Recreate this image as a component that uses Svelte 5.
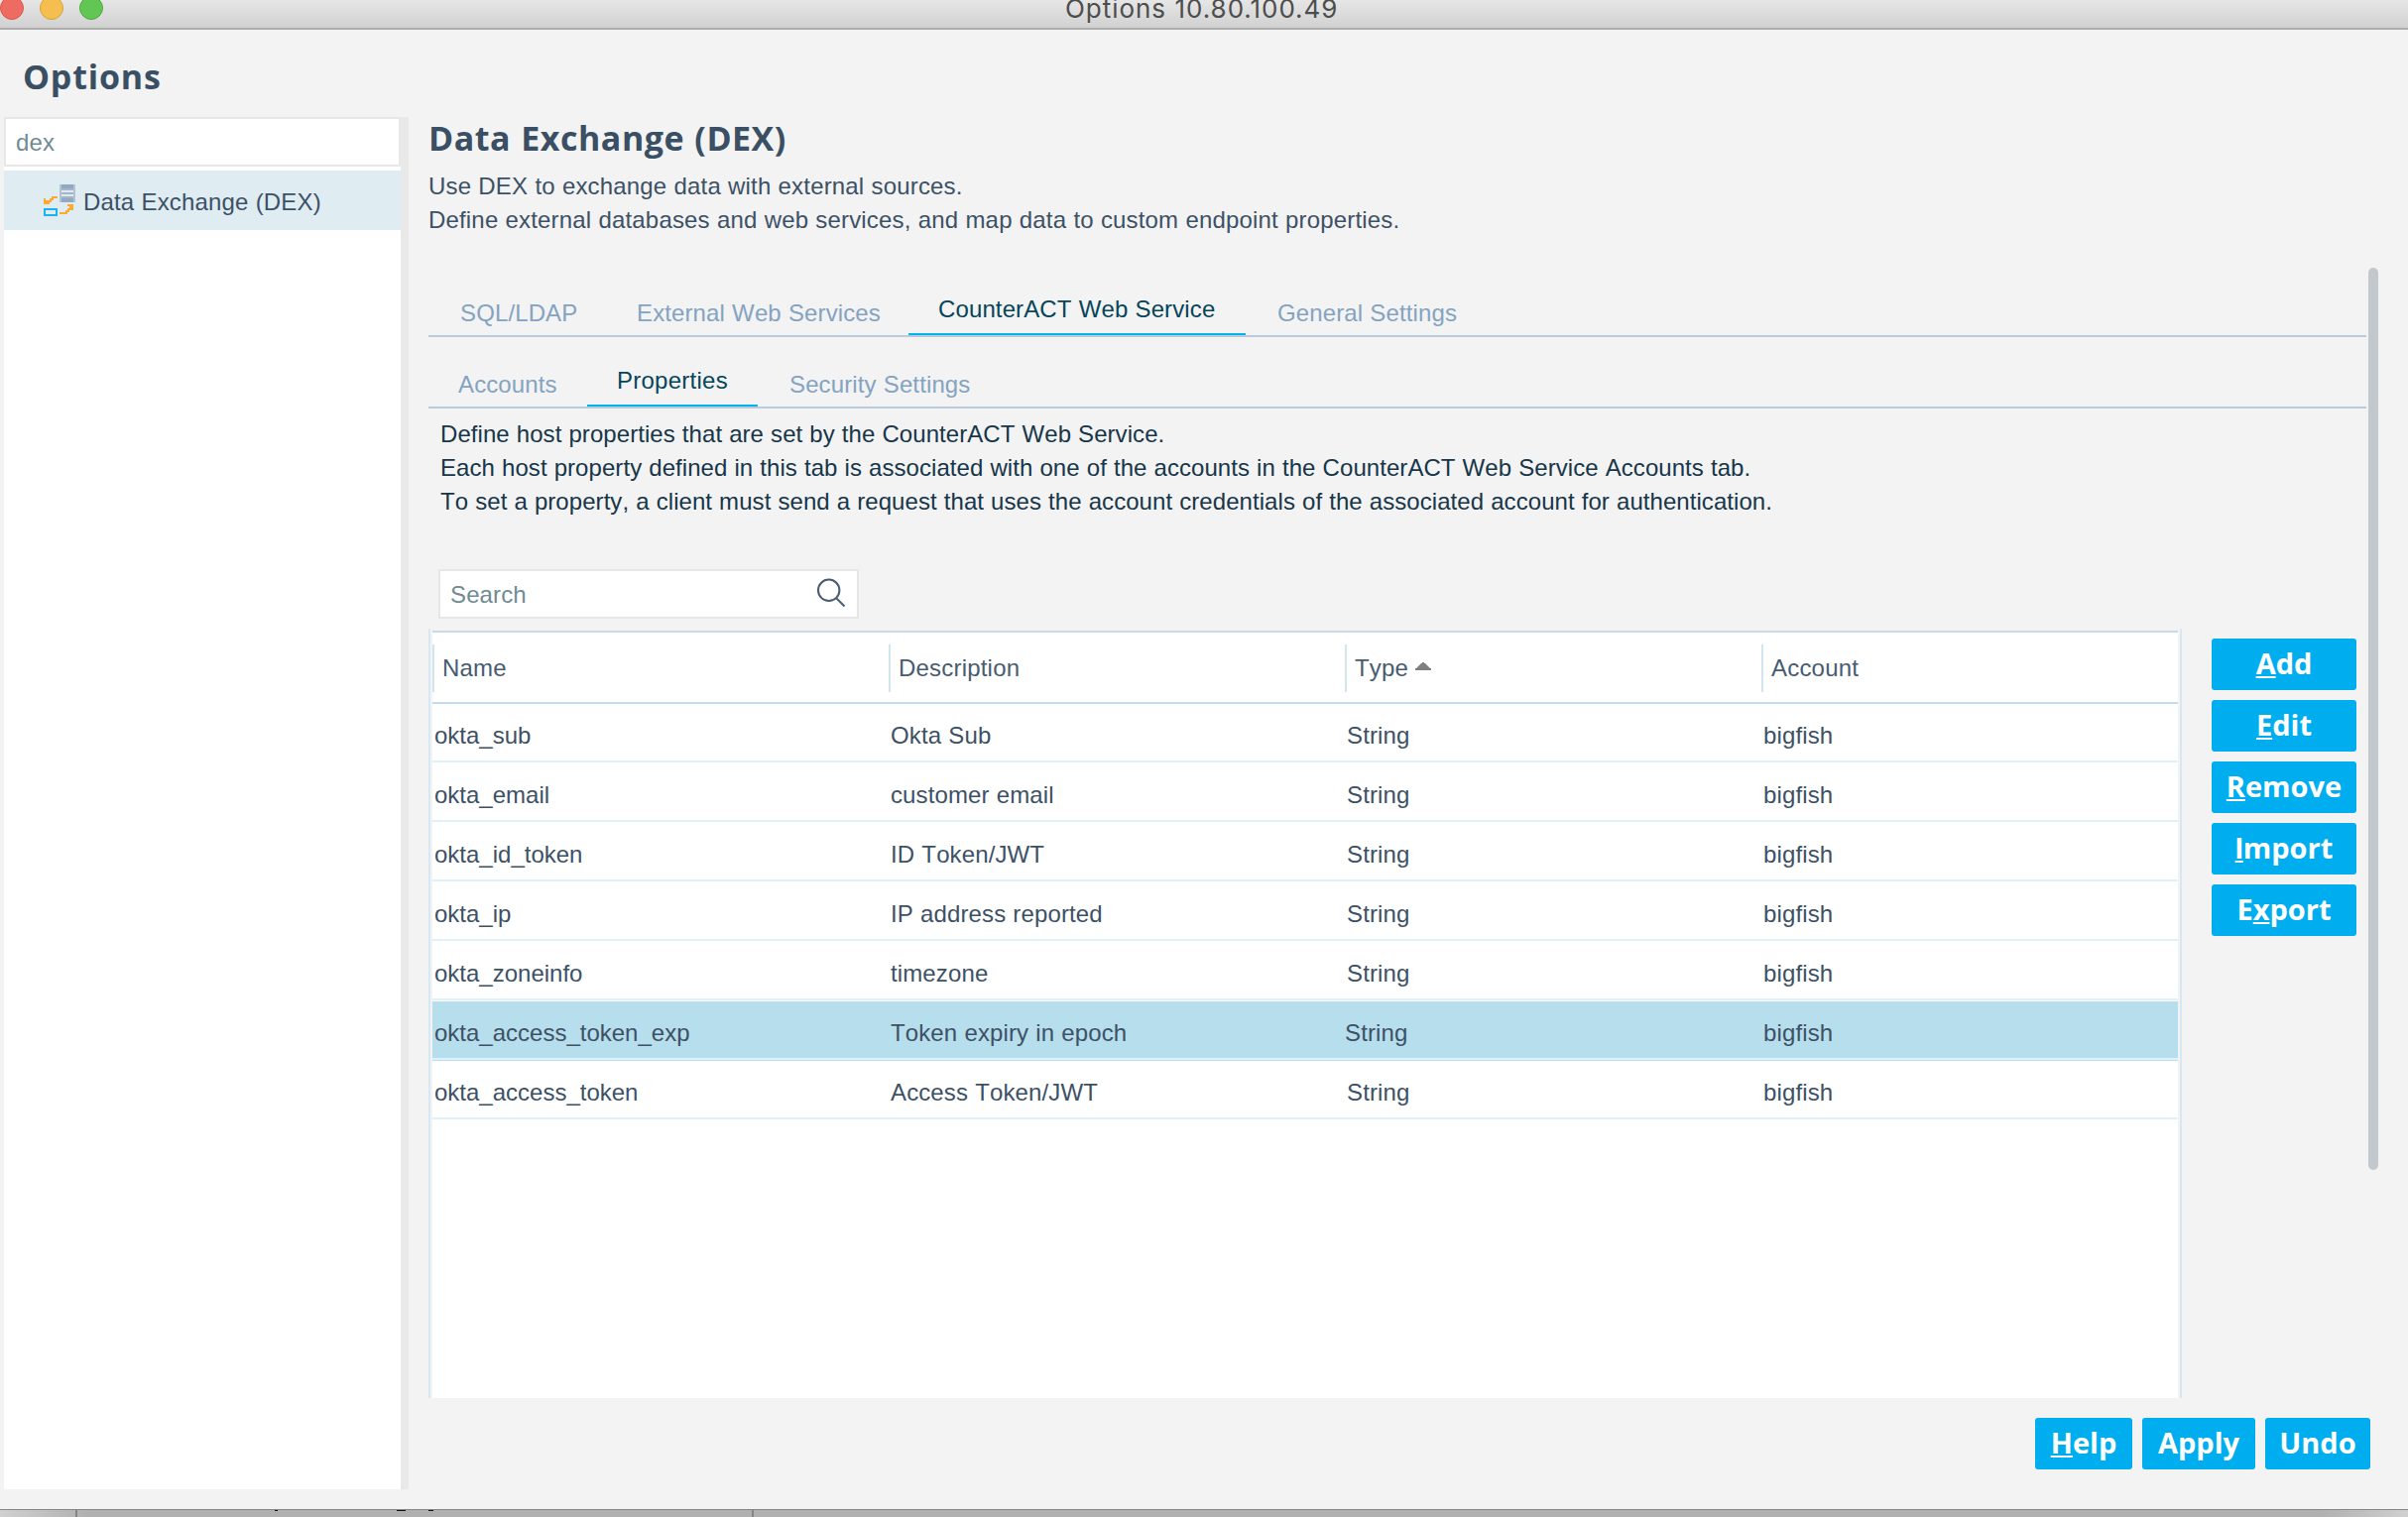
<script>
  const rows = [
    ['okta_sub', 'Okta Sub'],
    ['okta_email', 'customer email'],
    ['okta_id_token', 'ID Token/JWT'],
    ['okta_ip', 'IP address reported'],
    ['okta_zoneinfo', 'timezone'],
    ['okta_access_token_exp', 'Token expiry in epoch'],
    ['okta_access_token', 'Access Token/JWT'],
  ];
  const selected = 5;
  // before, mnemonic letter, after
  const actions = [
    ['', 'A', 'dd'],
    ['', 'E', 'dit'],
    ['', 'R', 'emove'],
    ['', 'I', 'mport'],
    ['E', 'x', 'port'],
  ];
</script>

<div class="screen">
  <header class="titlebar">
    <div class="lights"><i class="red"></i><i class="yellow"></i><i class="green"></i></div>
    <span class="wintitle">Options 10.80.100.49</span>
  </header>

  <div class="window">
    <aside>
      <h1>Options</h1>
      <div class="side">
        <div class="filter">dex</div>
        <div class="node">
          <svg width="32" height="32" viewBox="0 0 32 32" shape-rendering="crispEdges">
            <path d="M16 0h16v18H16z" fill="#b4c3d3" />
            <path d="M18 0h12v4H18zM18 14h12v4H18z" fill="#92a9c1" />
            <path d="M18 4h12v2H18zM18 8h12v2H18zM18 12h12v2H18z" fill="#a3b6c9" />
            <path d="M18 6h12v2H18zM18 10h12v2H18z" fill="#e0e9f1" />
            <path d="M8 12h6v2H8zM6 14h4v2H6zM0 14h2v2H0zM0 16h8v2H0zM0 18h6v2H0z" fill="#fbab30" />
            <path d="M24 20h6v2h-6zM26 22h4v4h-4zM24 24h2v2h-2zM22 26h4v2h-4zM16 28h8v2h-8z" fill="#fbab30" />
            <path d="M1 25h12v6H1z" fill="none" stroke="#1eb1f0" stroke-width="2" />
          </svg>
          <span>Data Exchange (DEX)</span>
        </div>
      </div>
    </aside>

    <main>
      <h2>Data Exchange (DEX)</h2>
      <p class="intro">Use DEX to exchange data with external sources.<br />Define external databases and web services, and map data to custom endpoint properties.</p>

      <div class="scroller">
        <div class="pane">
          <nav class="tabs main-tabs">
            <span class="w1">SQL/LDAP</span>
            <span class="w2">External Web Services</span>
            <span class="w3 active">CounterACT Web Service</span>
            <span class="w4">General Settings</span>
          </nav>
          <nav class="tabs sub-tabs">
            <span class="w1">Accounts</span>
            <span class="w2 active">Properties</span>
            <span class="w3">Security Settings</span>
          </nav>
          <p class="help">Define host properties that are set by the CounterACT Web Service.<br />Each host property defined in this tab is associated with one of the accounts in the CounterACT Web Service Accounts tab.<br />To set a property, a client must send a request that uses the account credentials of the associated account for authentication.</p>
          <div class="search">
            <span>Search</span>
            <svg width="30" height="30" viewBox="0 0 30 30" fill="none" stroke="#475c70" stroke-width="2">
              <circle cx="12.7" cy="12.3" r="10.7" />
              <path d="M20.5 20.5l8 8" />
            </svg>
          </div>
          <div class="area">
            <div class="frame">
              <div class="table">
                <div class="row head">
                  <span>Name</span><span>Description</span>
                  <span>Type <svg width="16" height="8" viewBox="0 0 16 8"><path d="M7 0h2v1h1l5 5h1v2H0V6h1l5-5h1z" fill="#7f7f7f" /></svg></span>
                  <span>Account</span>
                </div>
                {#each rows as [name, desc], i}
                  <div class="row" class:sel={i === selected}>
                    <span class="name">{name}</span><span>{desc}</span><span class="type">String</span><span>bigfish</span>
                  </div>
                {/each}
              </div>
            </div>
            <div class="actions">
              {#each actions as [pre, key, post]}
                <button><span>{pre}<u class:plain={key === 'I'}>{key}</u>{post}</span></button>
              {/each}
            </div>
          </div>
        </div>
        <div class="thumb"></div>
      </div>
      <footer>
        <button class="b1"><span><u>H</u>elp</span></button>
        <button class="b2"><span>Apply</span></button>
        <button class="b3"><span>Undo</span></button>
      </footer>
    </main>
  </div>
  <div class="behind"><i></i><b class="d1"></b><b class="d2"></b><b class="d3"></b><i class="second"></i></div>
</div>

<style>
  :global(body) { margin: 0; overflow: hidden; }
  * { box-sizing: border-box; }
  .screen {
    width: 2428px; height: 1530px; overflow: hidden; display: flex; flex-direction: column;
    background: #f3f3f3; color: #3d5166; font: 24px/34px "Liberation Sans", Arial, sans-serif; white-space: nowrap;
    font-kerning: none; letter-spacing: 0.12px; word-spacing: 0.33px;
  }
  h1, h2, p { margin: 0; }
  .titlebar {
    height: 30px; flex: none; display: grid; grid-template-columns: 1074px 1fr; overflow: hidden;
    background: linear-gradient(#e6e6e6, #d1d1d1); border-bottom: 2px solid #adadad;
  }
  .lights { display: flex; gap: 16px; margin-top: -4px; }
  .lights i { width: 24px; height: 24px; border-radius: 50%; border: 1px solid; }
  .lights .red { background: #ed6b60; border-color: #d9574c; }
  .lights .yellow { background: #f5bf4f; border-color: #d9a03b; }
  .lights .green { background: #62c655; border-color: #4cab3c; }
  .wintitle { font: 26px/32px Inter, sans-serif; color: #4d4d4d; margin-top: -7px; letter-spacing: 0.95px; }

  .window { height: 1492px; flex: none; display: flex; }
  aside { width: 412px; display: flex; flex-direction: column; padding: 0 0 20px 4px; }
  h1, h2 { font: bold 34px/40px "Open Sans", "Noto Sans", sans-serif; color: #3a4f63; letter-spacing: 0.5px; word-spacing: 1px; }
  h1 { height: 88px; padding: 27px 0 0 19px; letter-spacing: 0.8px; }
  .side { flex: 1; background: #fff; border-right: 8px solid #e9e9e9; }
  .filter { height: 50px; border: 2px solid #e7e7e7; padding: 7px 10px; color: #6f8b94; background: #fff; }
  .node { height: 60px; margin-top: 4px; background: #dfecf2; display: flex; align-items: center; padding-left: 40px; gap: 8px; }
  .node span { margin-top: 3px; letter-spacing: 0.16px; }

  main { flex: 1; padding-left: 20px; display: flex; flex-direction: column; }
  h2 { height: 141px; flex: none; padding-top: 89px; }
  .intro { height: 99px; flex: none; letter-spacing: 0.17px; }
  .scroller { display: flex; height: 1140px; flex: none; }
  .pane { width: 1954px; padding-top: 14px; }
  .thumb { width: 10px; height: 910px; margin-left: 2px; border-radius: 5px; background: #c2c8cc; }
  .tabs { display: flex; border-bottom: 2px solid #b9cbda; color: #84a3c1; align-items: flex-end; }
  .tabs span { height: 39px; }
  .tabs .active { color: #06455a; border-bottom: 2px solid #06b4ea; height: 43px; }
  .main-tabs { height: 56px; }
  .sub-tabs { height: 72px; }
  .main-tabs .w1 { width: 178px; padding-left: 32px; }
  .main-tabs .w2 { width: 306px; padding-left: 32px; }
  .main-tabs .w3 { width: 340px; padding-left: 30px; }
  .main-tabs .w4 { padding-left: 32px; }
  .sub-tabs .w1 { width: 160px; padding-left: 30px; }
  .sub-tabs .w2 { width: 172px; padding-left: 30px; letter-spacing: 0.25px; }
  .sub-tabs .w3 { padding-left: 32px; }
  .help { padding: 9px 0 0 12px; height: 162px; color: #17364a; letter-spacing: 0.06px; }
  .search {
    width: 424px; height: 50px; margin-left: 10px; background: #fff; border: 2px solid #e7e7e7;
    display: flex; justify-content: space-between; padding: 7px 11px 0 10px; color: #6f8b94;
  }
  .area { display: flex; margin-top: 10px; height: 776px; }
  .frame { width: 1768px; border: solid #d5e8f4; border-width: 0 2px; padding: 2px 2px 0; }
  .table { height: 774px; background: #fff; }
  .row { display: grid; grid-template-columns: 460px 460px 420px 420px; height: 60px; padding-top: 15px; position: relative; }
  .row span { padding-left: 2px; }
  .row .name { letter-spacing: 0; }
  .row:not(.head)::after { content: ''; position: absolute; left: 0; right: 0; top: 57px; height: 2px; background: #dff2fb; }
  .sel { background: #b6deec; }
  .sel .type { margin-left: -2px; }
  .head { height: 74px; border: solid #c5dbe6; border-width: 2px 0; padding-top: 12px; color: #475c70; letter-spacing: 0.2px; }
  .head span { height: 48px; border-left: 2px solid #d3e4ec; padding: 7px 0 0 8px; }
  .head span svg { margin: 0 0 6px 0; }
  .actions { margin: 10px 0 0 30px; display: flex; flex-direction: column; gap: 10px; }
  button {
    width: 146px; height: 52px; padding: 0; border: 0; border-radius: 3px; background: #00aeef; color: #fff;
    font: bold 29px/50px "Open Sans", "Noto Sans", sans-serif; display: flex; justify-content: center; align-items: flex-start;
  }
  u { text-decoration-thickness: 2px; text-underline-offset: 2px; text-decoration-skip-ink: none; }
  .plain { font-family: Inter, sans-serif; line-height: 1; }
  footer { display: flex; gap: 10px; padding-left: 1620px; margin-top: 20px; }
  .b1 { width: 98px; }
  .b2 { width: 114px; }
  .b3 { width: 106px; }
  .behind {
    height: 8px; border-top: 1px solid #858585; display: flex; align-items: flex-start;
    background: linear-gradient(90deg, #d0d0d0, #b0b0b0 90px, #b0b0b0 2340px, #d0d0d0);
  }
  .behind i { width: 2px; height: 8px; background: #858585; margin-left: 76px; }
  .behind b { height: 1px; background: #111; }
  .behind .d1 { width: 3px; margin-left: 199px; }
  .behind .d2 { width: 9px; margin-left: 120px; }
  .behind .d3 { width: 5px; margin-left: 23px; }
  .behind .second { margin-left: 321px; }
</style>
